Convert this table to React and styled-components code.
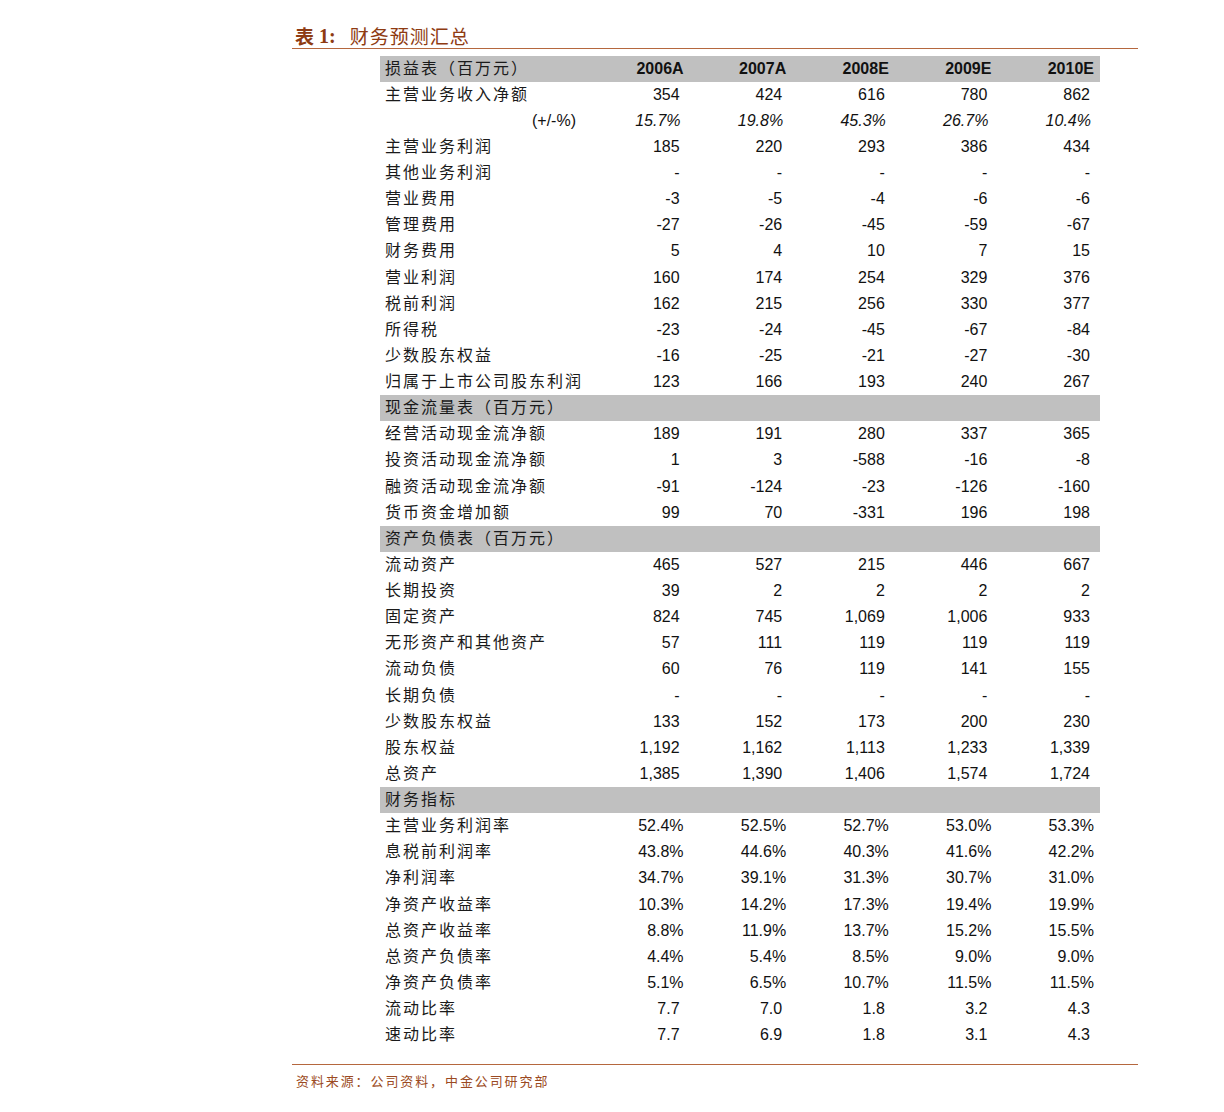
import React from "react";
import styled, { createGlobalStyle } from "styled-components";

const Global = createGlobalStyle`
  html, body { margin: 0; padding: 0; background: #fff; }
  body { font-family: "Liberation Sans", Arial, sans-serif; }
`;

const Page = styled.div`
  width: 846px;
  margin-left: 292px;
`;

const Title = styled.div`
  padding-top: 24px;
  padding-left: 3px;
  height: 24px;
  line-height: 24px;
  border-bottom: 1.5px solid #b5673e;
  color: #8e3b12;
  font-size: 19px;
  font-family: "Noto Sans CJK SC", sans-serif;
  display: flex;
  align-items: center;
`;

const TitleNo = styled.span`
  font-family: "Liberation Serif", serif;
  font-weight: bold;
  font-size: 20px;
  margin: 0 14px 0 5px;
`;

const TitleStrong = styled.span`
  font-weight: 600;
`;

const TitleText = styled.span`
  letter-spacing: 1px;
`;

const Table = styled.div`
  margin: 6.5px 0 0 88px;
  width: 720px;
`;

const Row = styled.div`
  display: grid;
  grid-template-columns: 203px repeat(5, 1fr);
  padding-right: 4px;
  height: 26.13px;
  align-items: center;
  background: ${(p) => (p.$shaded ? "#c0c0c0" : "transparent")};
`;

const Label = styled.div`
  font-family: "Noto Sans CJK SC", sans-serif;
  font-size: 16px;
  letter-spacing: 2px;
  color: #1a1a1a;
  padding-left: 5px;
  padding-bottom: 4px;
  white-space: nowrap;
  line-height: 20px;
`;

const SubLabel = styled.div`
  font-family: "Liberation Sans", Arial, sans-serif;
  font-size: 16px;
  text-align: right;
  padding-right: 7px;
  color: #111;
`;

const Cell = styled.div`
  font-family: "Liberation Sans", Arial, sans-serif;
  font-size: 16px;
  text-align: right;
  color: #111;
  white-space: nowrap;
  padding-right: ${(p) => p.$pad}px;
  font-weight: ${(p) => (p.$bold ? "bold" : "normal")};
  font-style: ${(p) => (p.$italic ? "italic" : "normal")};
`;

const Rule = styled.div`
  margin-top: 15.5px;
  border-top: 1.5px solid #b5673e;
`;

const Source = styled.div`
  margin-top: 6px;
  padding-left: 4px;
  line-height: 20px;
  font-family: "Noto Sans CJK SC", sans-serif;
  font-size: 13px;
  letter-spacing: 1.9px;
  color: #9b4a22;
`;

const years = ["2006A", "2007A", "2008E", "2009E", "2010E"];

const data = [
  { t: "h", label: "损益表（百万元）" },
  { label: "主营业务收入净额", v: ["354", "424", "616", "780", "862"] },
  { sub: "(+/-%)", v: ["15.7%", "19.8%", "45.3%", "26.7%", "10.4%"], italic: true },
  { label: "主营业务利润", v: ["185", "220", "293", "386", "434"] },
  { label: "其他业务利润", v: ["-", "-", "-", "-", "-"] },
  { label: "营业费用", v: ["-3", "-5", "-4", "-6", "-6"] },
  { label: "管理费用", v: ["-27", "-26", "-45", "-59", "-67"] },
  { label: "财务费用", v: ["5", "4", "10", "7", "15"] },
  { label: "营业利润", v: ["160", "174", "254", "329", "376"] },
  { label: "税前利润", v: ["162", "215", "256", "330", "377"] },
  { label: "所得税", v: ["-23", "-24", "-45", "-67", "-84"] },
  { label: "少数股东权益", v: ["-16", "-25", "-21", "-27", "-30"] },
  { label: "归属于上市公司股东利润", v: ["123", "166", "193", "240", "267"] },
  { t: "s", label: "现金流量表（百万元）" },
  { label: "经营活动现金流净额", v: ["189", "191", "280", "337", "365"] },
  { label: "投资活动现金流净额", v: ["1", "3", "-588", "-16", "-8"] },
  { label: "融资活动现金流净额", v: ["-91", "-124", "-23", "-126", "-160"] },
  { label: "货币资金增加额", v: ["99", "70", "-331", "196", "198"] },
  { t: "s", label: "资产负债表（百万元）" },
  { label: "流动资产", v: ["465", "527", "215", "446", "667"] },
  { label: "长期投资", v: ["39", "2", "2", "2", "2"] },
  { label: "固定资产", v: ["824", "745", "1,069", "1,006", "933"] },
  { label: "无形资产和其他资产", v: ["57", "111", "119", "119", "119"] },
  { label: "流动负债", v: ["60", "76", "119", "141", "155"] },
  { label: "长期负债", v: ["-", "-", "-", "-", "-"] },
  { label: "少数股东权益", v: ["133", "152", "173", "200", "230"] },
  { label: "股东权益", v: ["1,192", "1,162", "1,113", "1,233", "1,339"] },
  { label: "总资产", v: ["1,385", "1,390", "1,406", "1,574", "1,724"] },
  { t: "s", label: "财务指标" },
  { label: "主营业务利润率", v: ["52.4%", "52.5%", "52.7%", "53.0%", "53.3%"], pct: true },
  { label: "息税前利润率", v: ["43.8%", "44.6%", "40.3%", "41.6%", "42.2%"], pct: true },
  { label: "净利润率", v: ["34.7%", "39.1%", "31.3%", "30.7%", "31.0%"], pct: true },
  { label: "净资产收益率", v: ["10.3%", "14.2%", "17.3%", "19.4%", "19.9%"], pct: true },
  { label: "总资产收益率", v: ["8.8%", "11.9%", "13.7%", "15.2%", "15.5%"], pct: true },
  { label: "总资产负债率", v: ["4.4%", "5.4%", "8.5%", "9.0%", "9.0%"], pct: true },
  { label: "净资产负债率", v: ["5.1%", "6.5%", "10.7%", "11.5%", "11.5%"], pct: true },
  { label: "流动比率", v: ["7.7", "7.0", "1.8", "3.2", "4.3"] },
  { label: "速动比率", v: ["7.7", "6.9", "1.8", "3.1", "4.3"] },
];

export default function App() {
  return (
    <>
      <Global />
      <Page>
        <Title>
          <TitleStrong>表</TitleStrong>
          <TitleNo>1:</TitleNo>
          <TitleText>财务预测汇总</TitleText>
        </Title>
        <Table>
          {data.map((r, i) => {
            if (r.t === "h") {
              return (
                <Row key={i} $shaded>
                  <Label>{r.label}</Label>
                  {years.map((y) => (
                    <Cell key={y} $bold $pad={2}>
                      {y}
                    </Cell>
                  ))}
                </Row>
              );
            }
            if (r.t === "s") {
              return (
                <Row key={i} $shaded>
                  <Label>{r.label}</Label>
                </Row>
              );
            }
            const pad = r.italic ? 5 : r.pct ? 2 : 6;
            return (
              <Row key={i}>
                {r.sub ? <SubLabel>{r.sub}</SubLabel> : <Label>{r.label}</Label>}
                {r.v.map((v, j) => (
                  <Cell key={j} $pad={pad} $italic={r.italic}>
                    {v}
                  </Cell>
                ))}
              </Row>
            );
          })}
        </Table>
        <Rule />
        <Source>资料来源：公司资料，中金公司研究部</Source>
      </Page>
    </>
  );
}
